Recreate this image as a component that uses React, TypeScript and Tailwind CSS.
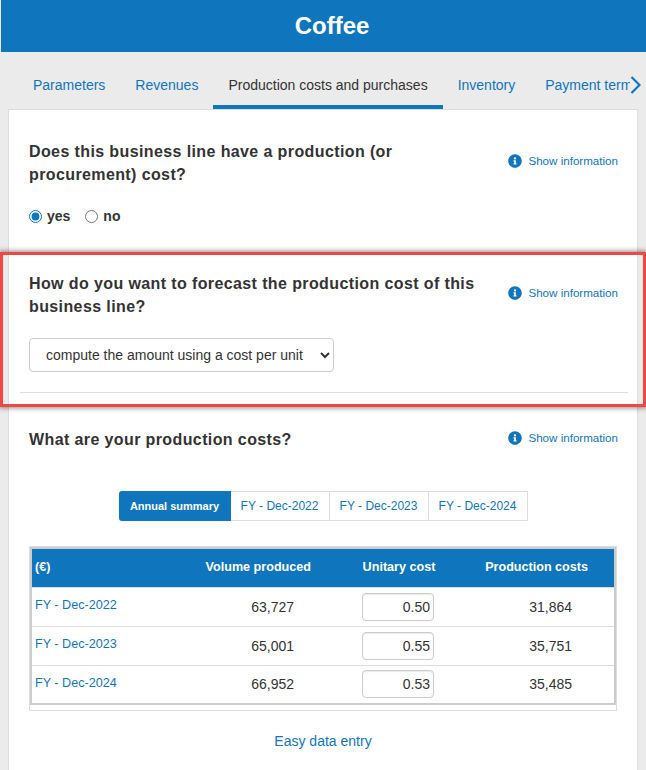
import React from 'react'
import { FaInfoCircle } from 'react-icons/fa'

const tabs = ['Parameters', 'Revenues', 'Production costs and purchases', 'Inventory', 'Payment terms']
const years = ['FY - Dec-2022', 'FY - Dec-2023', 'FY - Dec-2024']
const rows = [
  { year: 'FY - Dec-2022', volume: '63,727', cost: '0.50', total: '31,864' },
  { year: 'FY - Dec-2023', volume: '65,001', cost: '0.55', total: '35,751' },
  { year: 'FY - Dec-2024', volume: '66,952', cost: '0.53', total: '35,485' },
]

function ShowInfo() {
  return (
    <a className="flex items-center gap-[6px] -mr-px text-[11.6px] text-[#0f75bc] whitespace-nowrap">
      <FaInfoCircle size={14} /> Show information
    </a>
  )
}

export default function App() {
  return (
    <div className="w-[646px] h-[770px] overflow-hidden bg-[#ebebeb] pl-px font-['Liberation_Sans',Arial,sans-serif] text-[#333]">
      <div className="h-[52px] pl-[17px] bg-[#0f75bc] flex items-center justify-center text-white text-[24px] font-bold">Coffee</div>

      <div className="relative h-[57px] pl-[17px] pr-[16px] flex overflow-hidden">
        {tabs.map((tab) => (
          <a
            key={tab}
            className={
              tab === 'Production costs and purchases'
                ? 'shrink-0 px-[15px] pt-[23px] text-sm text-[#333] border-b-4 border-[#0f75bc] whitespace-nowrap'
                : 'shrink-0 px-[15px] pt-[23px] text-sm text-[#0f75bc] whitespace-nowrap'
            }
          >
            {tab}
          </a>
        ))}
        <div className="absolute right-0 top-0 h-full w-[16px] bg-[#ebebeb] flex items-start pt-[24px]">
          <svg width="11" height="18" viewBox="0 0 11 18" fill="none" stroke="#0f75bc" strokeWidth="2.2">
            <path d="M1.5 1 L9.5 9 L1.5 17" />
          </svg>
        </div>
      </div>

      <div className="mx-[7px] w-[630px] h-[661px] bg-white border border-[#ddd] border-b-0 px-[20px]">
        <div className="h-[142px] pt-[30px] flex justify-between">
          <div>
            <h2 className="w-[420px] text-base leading-[23px] font-bold tracking-[0.39px]">
              Does this business line have a production (or procurement) cost?
            </h2>
            <div className="mt-[20px] flex items-center text-sm font-bold">
              <input type="radio" name="cost" defaultChecked className="w-[13px] h-[13px] m-0 mr-[5px] accent-[#0f75bc]" />
              <span>yes</span>
              <input type="radio" name="cost" className="w-[13px] h-[13px] m-0 ml-[15px] mr-[5px]" />
              <span>no</span>
            </div>
          </div>
          <div className="pt-[12px]"><ShowInfo /></div>
        </div>

        <div className="relative h-[155px] -mx-[10px] px-[10px] pt-[20px] flex justify-between">
          <div>
            <h2 className="w-[460px] text-base leading-[23px] font-bold tracking-[0.39px]">
              How do you want to forecast the production cost of this business line?
            </h2>
            <select className="mt-[20px] w-[305px] h-[34px] pl-[12px] text-sm bg-white border border-[#ccc] rounded-[4px] text-[#333]">
              <option>compute the amount using a cost per unit</option>
            </select>
          </div>
          <div className="pt-[12px]"><ShowInfo /></div>
          <div className="absolute left-[1px] right-[-1px] top-[140px] border-t border-[#ddd]" />
          <div className="absolute -left-[19px] top-0 w-[646px] h-[155px] border-[3px] border-[#f44545] shadow-[0_0_5px_1px_rgba(0,0,0,0.45)] pointer-events-none" />
        </div>

        <div className="pt-[21px] flex justify-between">
          <h2 className="text-base leading-[23px] font-bold tracking-[0.39px]">What are your production costs?</h2>
          <div className="pt-[1px]"><ShowInfo /></div>
        </div>

        <div className="mt-[40px] flex justify-center text-xs">
          <span className="h-[30px] w-[112px] flex items-center justify-center bg-[#0f75bc] text-white text-[11px] font-bold rounded-l-[3px]">Annual summary</span>
          {years.map((y) => (
            <a key={y} className="h-[30px] w-[99px] flex items-center justify-center text-[#0f75bc] border border-l-0 border-[#ddd]">
              {y}
            </a>
          ))}
        </div>

        <div className="mt-[25px] border border-[#ddd] h-[165px]">
          <table className="w-full border-2 border-[#ccc] border-collapse text-sm table-fixed">
            <thead>
              <tr className="h-[39px] bg-[#0f75bc] text-white text-[12.6px]">
                <th className="w-[155px] px-[3px] text-left font-bold">(€)</th>
                <th className="w-[144px] pr-[19px] text-right font-bold">Volume produced</th>
                <th className="w-[138px] text-center font-bold">Unitary cost</th>
                <th className="pr-[26px] text-right font-bold">Production costs</th>
              </tr>
            </thead>
            <tbody>
              {rows.map((r) => (
                <tr key={r.year} className="h-[39px] border-t border-[#ddd]">
                  <td className="px-[3px] pb-[1px] text-[12.6px] text-[#0f75bc] whitespace-nowrap">{r.year}</td>
                  <td className="pr-[36px] text-right">{r.volume}</td>
                  <td className="text-center">
                    <input
                      readOnly
                      value={r.cost}
                      className="w-[72px] h-[28px] mr-[2px] px-[3px] text-right text-sm text-[#333] border border-[#ccc] rounded-[4px] shadow-[inset_0_1px_1px_rgba(0,0,0,0.08)]"
                    />
                  </td>
                  <td className="pr-[42px] text-right">{r.total}</td>
                </tr>
              ))}
            </tbody>
          </table>
        </div>

        <a className="block mt-[20px] text-center text-sm text-[#0f75bc]">Easy data entry</a>
      </div>
    </div>
  )
}
